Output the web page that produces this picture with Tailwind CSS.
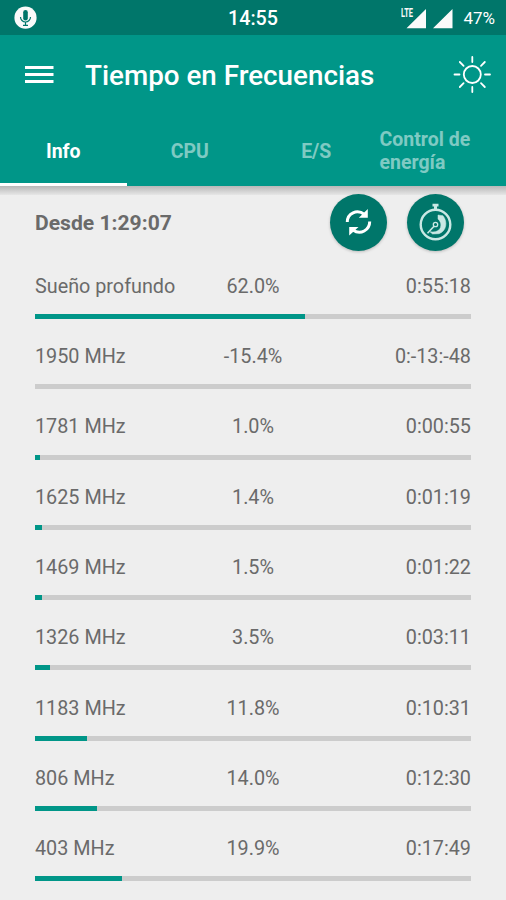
<!DOCTYPE html>
<html lang="es">
<head>
<meta charset="utf-8">
<title>Tiempo en Frecuencias</title>
<script src="https://cdn.jsdelivr.net/npm/@tailwindcss/browser@4"></script>
</head>
<body class="h-[900px] w-[506px] overflow-hidden bg-[#eeeeee] font-[Roboto,sans-serif] text-[#6a6a6a]">
<div class="flex h-[900px] flex-col overflow-hidden">
  <div class="relative flex h-[35px] shrink-0 items-center justify-between bg-[#00766a] pr-[11px] pl-[14px] text-white">
    <svg class="size-[23px]" viewBox="0 0 23 23"><circle cx="11.5" cy="11.7" r="11.1" fill="#fafafa"/><rect x="9.200" y="4" width="4.600" height="10.500" rx="2.300" fill="#00766a"/><path d="M6.500 11a5 5 0 0 0 10 0M11.500 16v3M9 19.300h5" fill="none" stroke="#00766a" stroke-width="1.200"/></svg>
    <div class="absolute inset-x-0 top-[7px] text-center text-[19.7px] leading-[23px] font-medium"><span>14:55</span></div>
    <div class="flex items-center">
      <div class="relative flex">
        <svg class="h-[22px] w-[54px]" viewBox="0 0 54 22"><path d="M27 2v19.300H7.500zM53.500 2v19.300H34z" fill="#fafafa"/></svg>
        <span class="absolute top-[-1px] left-[1.5px] block origin-left scale-x-[0.62] text-[12px] leading-[14px] font-bold whitespace-nowrap text-[#fafafa]">LTE</span>
      </div>
      <span class="ml-[10px] text-[17px] leading-[20px]">47%</span>
    </div>
  </div>
  <header class="shrink-0 bg-[#009688] text-white">
    <div class="flex h-[80px] items-center pr-[15px] pl-[25px]">
      <svg class="h-[18px] w-[29px]" viewBox="0 0 29 18"><path d="M0 1.500h28.500M0 8.500h28.500M0 15.500h28.500" stroke="#fff" stroke-width="2.800"/></svg>
      <h1 class="ml-[31px] flex-1 pt-[2px] text-[27.8px] leading-[34px] font-medium">Tiempo en Frecuencias</h1>
      <svg class="size-[38px]" viewBox="0 0 38 38" fill="none" stroke="#fff" stroke-width="1.800" stroke-linecap="round"><circle cx="19.300" cy="18.500" r="8.500"/><path d="M19.300 1v5M19.300 31v5M1.500 18.500h5M32 18.500h5M6.800 6l3.800 3.800M31.800 6l-3.800 3.800M6.800 31l3.800-3.800M31.800 31l-3.800-3.800"/></svg>
    </div>
    <div class="grid h-[71px] grid-cols-4 text-[19.5px] leading-[23px] text-white/50">
      <div class="flex items-center justify-center border-b-[3px] border-white pt-[4px] font-bold text-white">Info</div>
      <div class="flex items-center justify-center pt-px font-bold">CPU</div>
      <div class="flex items-center justify-center pt-px font-bold">E/S</div>
      <div class="flex items-center font-bold">Control de<br>energía</div>
    </div>
  </header>
  <div class="h-[9px] shrink-0 bg-linear-to-b from-[#b8b8b8] to-[#e6e6e6]"></div>
  <main class="flex flex-col px-[35px]">
    <div class="flex h-[54px] items-center">
      <div class="flex-1 pt-px text-[21.1px] leading-[26px] font-bold">Desde 1:29:07</div>
      <div class="mr-[7px] flex gap-[20px]">
        <svg class="-my-px size-[57px] rounded-full bg-[#00766a] shadow-[0_1px_3px_rgba(0,0,0,0.22)]" viewBox="0 0 57 57"><path d="M17.300 28C17.300 19.500 27 14.500 34.500 20.500M39.700 27.500C39.700 36 30.500 41.500 23 36" fill="none" stroke="#fff" stroke-width="3"/><path d="M37.800 15V23.800H28.800zM19.200 41.500V33H28.500z" fill="#fff"/></svg>
        <svg class="-my-px size-[57px] rounded-full bg-[#00766a] shadow-[0_1px_3px_rgba(0,0,0,0.22)]" viewBox="0 0 57 57" fill="none" stroke="#c9e8e4"><circle cx="28.500" cy="30.500" r="14.800" stroke-width="2.400"/><path d="M28.500 11v4.500" stroke-width="3"/><path d="M25.500 11.200h6" stroke-width="2.800"/><path d="M31 21l5 .7C41 28 39.500 37 32 39.700l-6.500 .3-2.500-2.200c5.500 .6 9.200-.8 10.500-4.300 1-3.500 .2-6-2.500-8.500z" fill="#c9e8e4" stroke-width=".5"/><circle cx="28.500" cy="30.500" r="2.200" stroke-width="1.300"/><path d="M27 32.200l-6.500 7" stroke-width="1.600"/></svg>
      </div>
    </div>
    <div id="rows"></div>
  </main>
</div>
<script>
const data = [
  ["Sueño profundo", "62.0%", "0:55:18", 270.2],
  ["1950 MHz", "-15.4%", "0:-13:-48", 0],
  ["1781 MHz", "1.0%", "0:00:55", 5],
  ["1625 MHz", "1.4%", "0:01:19", 7],
  ["1469 MHz", "1.5%", "0:01:22", 7],
  ["1326 MHz", "3.5%", "0:03:11", 15.4],
  ["1183 MHz", "11.8%", "0:10:31", 51.6],
  ["806 MHz", "14.0%", "0:12:30", 61.6],
  ["403 MHz", "19.9%", "0:17:49", 87.3]
];
document.getElementById("rows").innerHTML = data.map(([name, pct, time, w]) => `
  <div class="h-[70.3px] pt-[25.8px]">
    <div class="grid grid-cols-3 text-[19.8px] leading-[23px]">
      <span class="whitespace-nowrap">${name}</span><span class="text-center">${pct}</span><span class="text-right">${time}</span>
    </div>
    <div class="mt-[16.2px] h-[5px] w-[436px] bg-[#cccccc]"><div class="h-full bg-[#009688]" style="width:${w}px"></div></div>
  </div>`).join("");
</script>
</body>
</html>
